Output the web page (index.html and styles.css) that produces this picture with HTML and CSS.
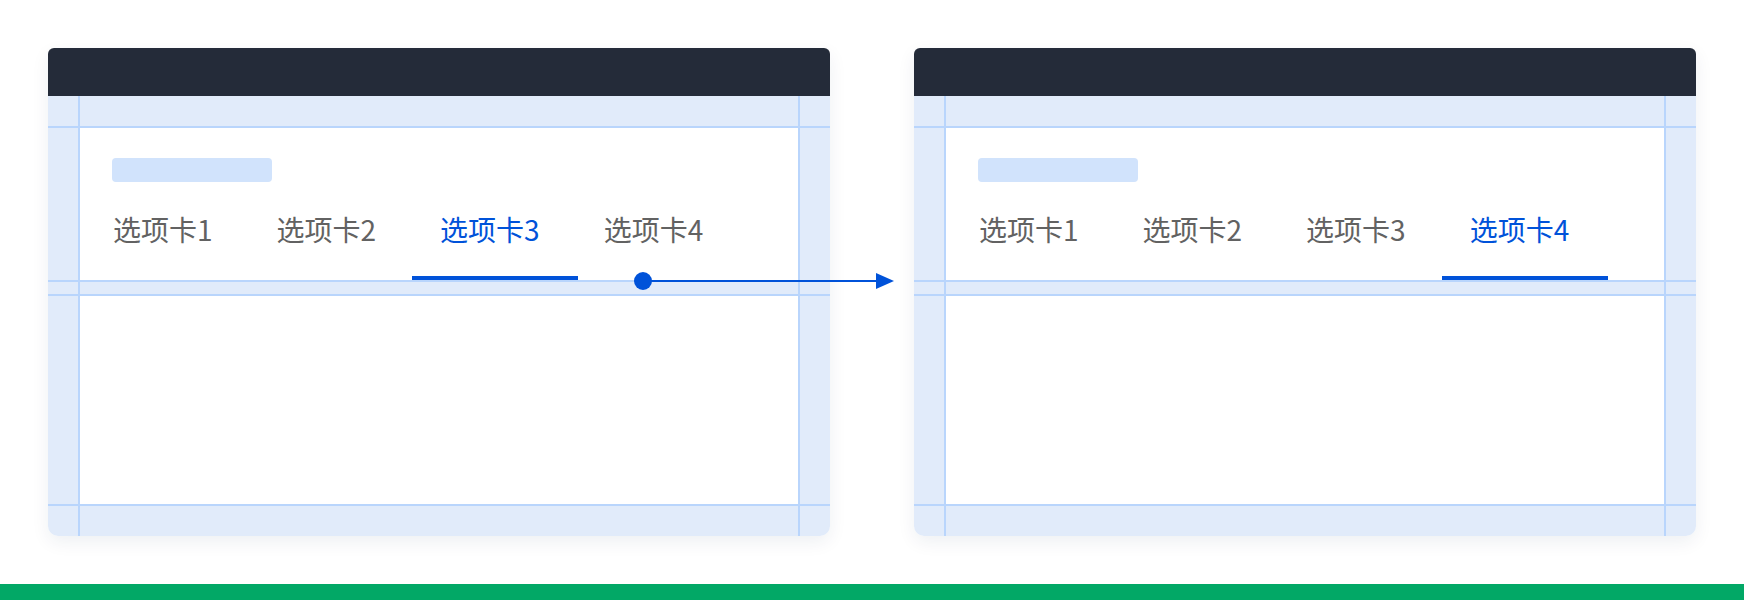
FILE: index.html
```html
<!DOCTYPE html>
<html lang="zh-CN">
<head>
  <meta charset="UTF-8">
  <title>选项卡切换</title>
  <link rel="stylesheet" href="styles.css">
</head>
<body>

  <div class="stage">
    <!-- before: tab 3 selected -->
    <div class="card">
      <div class="card-head"></div>
      <div class="card-body">
        <div class="guide guide-h row-2"></div>
        <div class="guide guide-h row-4"></div>
        <div class="guide guide-h row-6"></div>
        <div class="guide guide-h row-8"></div>
        <div class="guide guide-v col-2"></div>
        <div class="guide guide-v col-4"></div>
        <div class="panel panel-top">
          <div class="title-bar"></div>
          <div class="tabs">
            <div class="tab">选项卡1</div>
            <div class="tab">选项卡2</div>
            <div class="tab active">选项卡3</div>
            <div class="tab">选项卡4</div>
          </div>
        </div>
        <div class="panel panel-content"></div>
      </div>
    </div>

    <!-- after: tab 4 selected -->
    <div class="card">
      <div class="card-head"></div>
      <div class="card-body">
        <div class="guide guide-h row-2"></div>
        <div class="guide guide-h row-4"></div>
        <div class="guide guide-h row-6"></div>
        <div class="guide guide-h row-8"></div>
        <div class="guide guide-v col-2"></div>
        <div class="guide guide-v col-4"></div>
        <div class="panel panel-top">
          <div class="title-bar"></div>
          <div class="tabs">
            <div class="tab">选项卡1</div>
            <div class="tab">选项卡2</div>
            <div class="tab">选项卡3</div>
            <div class="tab active">选项卡4</div>
          </div>
        </div>
        <div class="panel panel-content"></div>
      </div>
    </div>

    <svg class="move-arrow" width="280" height="24" viewBox="0 0 280 24">
      <circle cx="9" cy="12" r="9" fill="#0052d9"/>
      <line x1="9" y1="12" x2="244" y2="12" stroke="#0052d9" stroke-width="2"/>
      <polygon points="242,4 260,12 242,20" fill="#0052d9"/>
    </svg>
  </div>

  <div class="footer-bar"></div>

</body>
</html>
```

FILE: styles.css
```css
html, body {
  margin: 0;
  padding: 0;
  background: #ffffff;
  font-family: "Noto Sans CJK SC", "Noto Sans", sans-serif;
}

.stage {
  position: relative;
  display: flex;
  gap: 84px;
  height: 584px;
  padding: 48px 0 0 48px;
  box-sizing: border-box;
}

.card {
  width: 782px;
  height: 488px;
  border-radius: 6px 6px 10px 10px;
  overflow: hidden;
  box-shadow: 0 6px 18px rgba(20, 40, 80, 0.07);
}

.card-head {
  height: 48px;
  background: #242b39;
}

/* guide grid: 30px margins, 2px guide lines */
.card-body {
  display: grid;
  grid-template-columns: 30px 2px 1fr 2px 30px;
  grid-template-rows: 30px 2px 152px 2px 12px 2px 208px 2px 30px;
  background: #e1ebfa;
}

.guide {
  background: #b9d5fc;
}
.guide-h { grid-column: 1 / -1; }
.guide-v { grid-row: 1 / -1; }
.row-2 { grid-row: 2; }
.row-4 { grid-row: 4; }
.row-6 { grid-row: 6; }
.row-8 { grid-row: 8; }
.col-2 { grid-column: 2; }
.col-4 { grid-column: 4; }

.panel {
  background: #ffffff;
  grid-column: 3;
}

.panel-top {
  grid-row: 3;
  padding: 30px 0 0 32px;
  display: flex;
  flex-direction: column;
}

.panel-content {
  grid-row: 7;
}

.title-bar {
  width: 160px;
  height: 24px;
  border-radius: 4px;
  background: #d1e3fc;
}

.tabs {
  display: flex;
  gap: 64px;
  height: 98px;
  padding-left: 1px;
}

.tab {
  position: relative;
  display: flex;
  align-items: center;
  padding-bottom: 4px;
  font-size: 28px;
  color: #626262;
  white-space: nowrap;
}

.tab.active {
  color: #0052d9;
}

.tab.active::after {
  content: '';
  position: absolute;
  left: -28px;
  bottom: 0;
  width: 166px;
  height: 4px;
  background: #0052d9;
}

.move-arrow {
  position: absolute;
  left: 634px;
  top: 269px;
}

.footer-bar {
  height: 16px;
  background: #02a866;
}
```
